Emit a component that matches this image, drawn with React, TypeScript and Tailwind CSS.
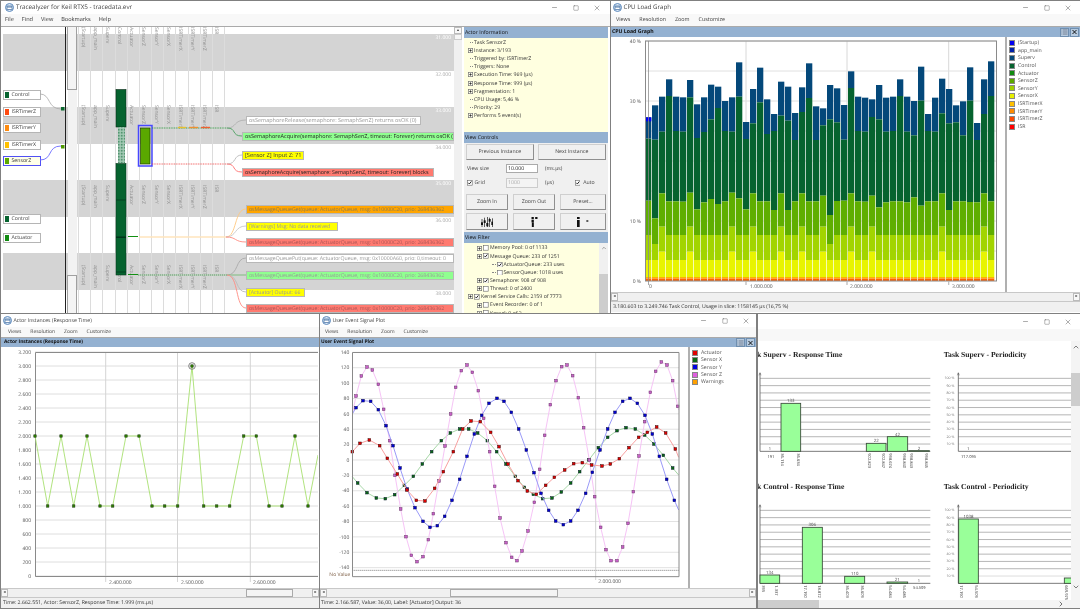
import type { ReactNode } from "react";
import { Minus, Square, X, ChevronUp, ChevronDown, ChevronRight, List } from "lucide-react";

const base = "font-['Open_Sans',sans-serif] text-[5.2px] leading-none text-[#333] [text-rendering:geometricPrecision]";

function AppIcon() {
  return (
    <svg width="9" height="9" viewBox="0 0 18 18" className="shrink-0">
      <circle cx="9" cy="9" r="8" fill="#dbe7f4" stroke="#5f8bbd" strokeWidth="2" />
      <rect x="4" y="6" width="10" height="7" fill="#fff" stroke="#4d77a8" strokeWidth="1.5" />
      <path d="M4 8h10" stroke="#4d77a8" strokeWidth="2" />
    </svg>
  );
}

function WinControls({ className = "" }: { className?: string }) {
  return (
    <div className={"ml-auto flex items-center text-[#444] " + className}>
      <div className="flex w-[21px] justify-center"><Minus size={7} strokeWidth={1.5} /></div>
      <div className="flex w-[21px] justify-center"><Square size={6} strokeWidth={1.5} /></div>
      <div className="flex w-[21px] justify-center"><X size={8} strokeWidth={1.3} /></div>
    </div>
  );
}

function TitleBar({ title, h, right, size = "text-[5.2px]" }: { title?: string; h: string; right?: string; size?: string }) {
  return (
    <div className={"flex shrink-0 items-center gap-[1.5px] bg-white pl-[2px] " + h}>
      {title && <AppIcon />}
      {title && <span className={"text-[#444] " + size}>{title}</span>}
      <WinControls className={right} />
    </div>
  );
}

function MenuBar({ items, h, gap, size = "text-[5px] pl-[5px]" }: { items: string[]; h: string; gap: string; size?: string }) {
  return (
    <div className={"flex shrink-0 items-center bg-[#f8f8f8] text-[#444] " + size + " " + h + " " + gap}>
      {items.map((m) => (
        <span key={m}>{m}</span>
      ))}
    </div>
  );
}

function PanelHead({ title, h = "h-[10px]", buttons, size = "text-[5.2px] pl-[1px]" }: { title: string; h?: string; buttons?: boolean; size?: string }) {
  return (
    <div className={"flex shrink-0 items-center bg-[#94b1d1] font-bold text-[#111] " + size + " " + h}>
      <span>{title}</span>
      {buttons && (
        <div className="ml-auto mr-[1px] flex gap-[1px]">
          <div className="flex size-[9px] items-center justify-center border border-[#6f8fb0] bg-[#b7cbe0]"><List size={8} strokeWidth={1.5} color="#223" /></div>
          <div className="flex size-[9px] items-center justify-center border border-[#6f8fb0] bg-[#b7cbe0]"><X size={8} strokeWidth={3} color="#000" /></div>
        </div>
      )}
    </div>
  );
}

function HScroll({ children }: { children?: ReactNode }) {
  return (
    <div className="flex h-[10px] shrink-0 items-center border-y border-[#c8c8c8] bg-[#f0f0f0] text-[4px] text-[#222]">
      <div className="flex h-[8px] w-[7px] shrink-0 items-center justify-center border border-[#bbb] bg-[#f8f8f8]">◂</div>
      {children}
      <div className="ml-auto flex h-[8px] w-[7px] shrink-0 items-center justify-center border border-[#bbb] bg-[#f8f8f8]">▸</div>
    </div>
  );
}

function Status({ text, pl = "pl-[2px]" }: { text: string; pl?: string }) {
  return <div className={"flex h-[10px] shrink-0 items-center bg-[#f0f0f0] text-[5.2px] text-[#333] " + pl}>{text}</div>;
}

function PlusBox() {
  return (
    <svg width="5" height="5" viewBox="0 0 10 10" className="shrink-0">
      <rect x="0.7" y="0.7" width="8.6" height="8.6" fill="#fffff0" stroke="#777" strokeWidth="1.4" />
      <path d="M2.5 5h5M5 2.5v5" stroke="#222" strokeWidth="1.4" />
    </svg>
  );
}

function Check({ on }: { on?: boolean }) {
  return (
    <svg width="5.5" height="5.5" viewBox="0 0 11 11" className="shrink-0">
      <rect x="0.6" y="0.6" width="9.8" height="9.8" fill="#fff" stroke="#666" strokeWidth="1.2" />
      {on && <path d="M2.5 5.5l2.2 2.4 4-5" fill="none" stroke="#111" strokeWidth="1.8" />}
    </svg>
  );
}

/* ---------- trace view ---------- */

const columns = ["(Startup)", "app_main", "Superv", "Control", "Actuator", "SensorZ", "SensorY", "SensorX", "ISRTimerX", "ISRTimerY", "ISRTimerZ", "ISR"];
// the 37.000 mark sits behind an event label in the picture
const times = ["31.000", "32.000", "33.000", "34.000", "35.000", "36.000", "", "38.000"];

const actors = [
  { name: "Control", pos: "top-[63px]", sw: "bg-[#06632f]" },
  { name: "ISRTimerZ", pos: "top-[80px]", sw: "bg-[#ff4a10]" },
  { name: "ISRTimerY", pos: "top-[96px]", sw: "bg-[#ff8c10]" },
  { name: "ISRTimerX", pos: "top-[113px]", sw: "bg-[#ffc000]" },
  { name: "Control", pos: "top-[187px]", sw: "bg-[#06632f]" },
  { name: "Actuator", pos: "top-[206px]", sw: "bg-[#108a10]" },
];

const events = [
  { t: "osSemaphoreRelease(semaphore: SemaphSenZ) returns osOK (0)", c: "left-[245px] top-[89px] w-[175px] bg-white text-[#999] text-[5.5px]" },
  { t: "osSemaphoreAcquire(semaphore: SemaphSenZ, timeout: Forever) returns osOK (0)", c: "left-[241px] top-[105px] w-[212px] bg-[#90ff90] text-[#222] text-[5.5px]" },
  { t: "[Sensor Z] Input Z: 71", c: "left-[241px] top-[124px] w-[62px] bg-[#ffff00] text-[#333] text-[5.7px]" },
  { t: "osSemaphoreAcquire(semaphore: SemaphSenZ, timeout: Forever) blocks", c: "left-[241px] top-[141px] w-[192px] bg-[#ff7a70] text-[#222] text-[5.4px]" },
  { t: "osMessageQueueGet(queue: ActuatorQueue, msg: 0x10000C20, prio: 268436362", c: "left-[245px] top-[178px] w-[208px] bg-[#ffa500] text-[#8a7a50] text-[5.2px]" },
  { t: "[Warnings] Msg: No data received", c: "left-[245px] top-[195px] w-[92px] bg-[#ffff00] text-[#999] text-[5.2px]" },
  { t: "osMessageQueueGet(queue: ActuatorQueue, msg: 0x10000C20, prio: 268436362", c: "left-[245px] top-[211px] w-[208px] bg-[#ff7a70] text-[#a55] text-[5.2px]" },
  { t: "osMessageQueuePut(queue: ActuatorQueue, msg: 0x10000A60, prio: 0,timeout: 0", c: "left-[245px] top-[227px] w-[208px] bg-white text-[#999] text-[5.2px]" },
  { t: "osMessageQueueGet(queue: ActuatorQueue, msg: 0x10000C20, prio: 268436362", c: "left-[245px] top-[244px] w-[208px] bg-[#90ff90] text-[#999] text-[5.2px]" },
  { t: "[Actuator] Output: 66", c: "left-[245px] top-[261px] w-[59px] bg-[#ffff00] text-[#999] text-[5.2px]" },
  { t: "osMessageQueueGet(queue: ActuatorQueue, msg: 0x10000C20, prio: 268436362", c: "left-[245px] top-[277px] w-[208px] bg-[#ff7a70] text-[#a55] text-[5.2px]" },
];

function TraceView() {
  return (
    <div className="relative h-full flex-1 overflow-hidden bg-white">
      {/* alternating time bands */}
      <div className="flex flex-col pl-[2px] pt-[7px]">
        {times.map((t, i) => (
          <div key={i} className={"h-[36.55px] shrink-0 pr-[3px] pt-[2px] text-right text-[5px] " + (i % 2 === 0 ? "bg-[#d4d4d4] text-white" : "bg-white text-[#aaa]")}>
            {t}
          </div>
        ))}
      </div>

      {/* column rulers */}
      {columns.map((_, i) => (
        <div key={i} className="absolute bottom-0 top-0 w-px bg-[#dcdcdc]" style={{ left: 77 + 12.17 * i }} />
      ))}
      <div className="absolute bottom-0 top-0 w-px bg-[#dcdcdc]" style={{ left: 223 }} />
      {[0, 78, 158, 238].map((top) =>
        columns.map((c, i) => (
          <span key={c + top} className="absolute text-[5px] text-[#8f8f8f] [writing-mode:vertical-rl]" style={{ left: 78.5 + 12.17 * i, top }}>
            {c}
          </span>
        )),
      )}

      {/* timeline scrubber */}
      <div className="absolute bottom-0 left-[64px] top-0 w-[1px] bg-[#222]" />
      <div className="absolute left-[67px] top-[63px] h-[185px] w-[9px] bg-[#f2f2f2]" />
      <div className="absolute left-[66px] top-0 h-[63px] w-[10px] border border-t-0 border-[#a0a0a0] bg-[#f4f4f4]" />
      <div className="absolute bottom-0 left-[66px] top-[248px] w-[10px] border border-b-0 border-[#a0a0a0] bg-[#f4f4f4]" />

      {/* actors on the left */}
      {actors.map((a) => (
        <div key={a.name + a.pos} className={"absolute left-[2px] flex h-[9.5px] w-[38px] items-center gap-[3px] border border-b-[1.5px] border-r-[1.5px] border-[#b5b5b5] bg-white pl-[1px] text-[5.2px] text-[#444] " + a.pos}>
          <span className={"h-[6px] w-[3.5px] shrink-0 " + a.sw} />
          {a.name}
        </div>
      ))}
      <div className="absolute left-[2px] top-[129px] flex h-[10px] w-[38px] items-center gap-[3px] border-[1.5px] border-[#5050f4] bg-[#ffffe8] pl-[1px] text-[5.2px] text-[#333]">
        <span className="h-[6px] w-[3.5px] shrink-0 bg-[#5aa800]" />
        SensorZ
      </div>

      {/* fragments and connectors */}
      <svg className="absolute left-0 top-0" width="453" height="286" viewBox="0 27 453 286">
        <defs>
          <pattern id="hatch" width="1.5" height="1.5" patternUnits="userSpaceOnUse">
            <rect width="1.5" height="1.5" fill="#a8cdb8" />
            <rect width="0.75" height="0.75" fill="#2f7c52" />
          </pattern>
        </defs>
        <path d="M39 94C50 94 46 109 60 109" fill="none" stroke="#aaa" strokeWidth="0.8" />
        <path d="M39 160C52 160 46 146 60 146" fill="none" stroke="#6a6aff" strokeWidth="0.9" />
        <rect x="60" y="107" width="3.5" height="3.5" fill="#0b6b2f" />
        <rect x="60" y="145" width="3.5" height="3.5" fill="#4f9a00" />

        <rect x="115" y="89.5" width="10" height="37.5" fill="#06632f" stroke="#0a2c18" strokeWidth="0.6" />
        <rect x="117" y="127" width="7" height="36" fill="url(#hatch)" />
        <rect x="115" y="163.5" width="10" height="111.5" fill="#06632f" stroke="#0a3a1e" strokeWidth="0.6" />
        <rect x="115" y="199.5" width="10" height="1" fill="#034020" />
        <rect x="115" y="236.5" width="10" height="1.4" fill="#02301a" />
        <rect x="115" y="271.5" width="10" height="1" fill="#034020" />

        <rect x="137.5" y="125.5" width="13.5" height="40.5" fill="none" stroke="#4848ff" strokeWidth="1.5" />
        <rect x="139.5" y="128" width="9.5" height="36" fill="#5aa800" stroke="#203f00" strokeWidth="0.7" />

        <path d="M151 128H226" stroke="#2e9a3e" strokeWidth="0.9" strokeDasharray="1 0.7" />
        <path d="M177 127.5h8" stroke="#e8c030" strokeWidth="1.4" />
        <path d="M188 127.5h9" stroke="#f09030" strokeWidth="1.4" />
        <path d="M200 127.5h9" stroke="#f06030" strokeWidth="1.4" />
        <path d="M226 128C236 128 232 120 245 120" fill="none" stroke="#b0b0b0" strokeWidth="0.9" />
        <path d="M226 128C236 128 230 136 241 136" fill="none" stroke="#4ca060" strokeWidth="0.9" />

        <path d="M151 164H226" stroke="#f05050" strokeWidth="0.9" strokeDasharray="1 0.7" />
        <path d="M226 164C236 164 232 155 241 155" fill="none" stroke="#bbb" strokeWidth="0.9" />
        <path d="M226 164C236 164 230 172 241 172" fill="none" stroke="#ff7070" strokeWidth="0.9" />

        <path d="M127 236.5h10" stroke="#129012" strokeWidth="1" />
        <path d="M138 237H225" stroke="#ffe4bd" strokeWidth="1.6" />
        <path d="M225 237C236 237 233 209 245 209" fill="none" stroke="#ffc880" strokeWidth="0.9" />
        <path d="M225 237C236 237 233 226 245 226" fill="none" stroke="#c8c8c8" strokeWidth="0.9" />
        <path d="M225 237C236 237 233 242 245 242" fill="none" stroke="#ff8a80" strokeWidth="0.9" />

        <path d="M127 274.5h10" stroke="#129012" strokeWidth="1" />
        <path d="M137 275H226" stroke="#b5d0b5" strokeWidth="1.4" />
        <path d="M137 275H226" stroke="#3a7a4a" strokeWidth="0.6" strokeDasharray="1 1" />
        <path d="M226 275C238 275 234 258 245 258" fill="none" stroke="#aaa" strokeWidth="0.9" />
        <path d="M226 275H245" stroke="#8cc08c" strokeWidth="1.2" />
        <path d="M226 275C238 275 234 292 245 292" fill="none" stroke="#bbb" strokeWidth="0.9" />
        <path d="M226 275C238 275 234 308 245 308" fill="none" stroke="#ff8a80" strokeWidth="0.9" />
      </svg>

      {events.map((e, i) => (
        <div key={i} className={"absolute flex h-[9px] items-center overflow-hidden whitespace-nowrap border border-b-[1.5px] border-[#b8b8b8] pl-[2px] " + e.c}>
          {e.t}
        </div>
      ))}
    </div>
  );
}

/* ---------- side panel ---------- */

function InfoRow({ text, plus }: { text: string; plus?: boolean }) {
  return (
    <div className="flex h-[8.12px] items-center pl-[4px] text-[5.2px] text-[#333]">
      {plus ? <PlusBox /> : <span className="ml-[2px] w-[3px] border-t border-dotted border-[#888]" />}
      <span className="ml-[1px]">{text}</span>
    </div>
  );
}

function FilterRow({ text, indent, on, box = true, nested }: { text: string; indent: string; on?: boolean; box?: boolean; nested?: boolean }) {
  return (
    <div className={"flex h-[8.15px] items-center gap-[1px] whitespace-nowrap text-[5.2px] text-[#333] " + indent}>
      {box ? <PlusBox /> : <span className="w-[4px] border-t border-dotted border-[#888]" />}
      <Check on={on} />
      <span className={nested ? "" : "ml-[0.5px]"}>{text}</span>
    </div>
  );
}

const btn = "flex items-center justify-center border border-[#cfcfcf] border-b-[#8f8f8f] border-r-[#8f8f8f] bg-[#f0f0f0] text-[5.2px] text-[#444]";

function SidePanel() {
  return (
    <div className="ml-[2px] flex h-full w-[144px] shrink-0 flex-col bg-[#f0f0f0]">
      <PanelHead title="Actor Information" h="h-[11px] font-normal" />
      <div className="h-[94px] shrink-0 bg-[#ffffe0] pt-[0.5px]">
        <InfoRow text="Task SensorZ" />
        <InfoRow text="Instance: 3/193" plus />
        <InfoRow text="Triggered by: ISRTimerZ" />
        <InfoRow text="Triggers: None" />
        <InfoRow text="Execution Time: 969 (µs)" plus />
        <InfoRow text="Response Time: 999 (µs)" plus />
        <InfoRow text="Fragmentation: 1" plus />
        <InfoRow text="CPU Usage: 5,46 %" />
        <InfoRow text="Priority: 29" />
        <InfoRow text="Performs 5 event(s)" plus />
      </div>
      <PanelHead title="View Controls" h="h-[11px] font-normal" />
      <div className="flex h-[89px] shrink-0 flex-col px-[2px] pt-[1px]">
        <div className="flex h-[16px] gap-[4px]">
          <div className={btn + " w-[68px]"}>Previous Instance</div>
          <div className={btn + " w-[69px]"}>Next Instance</div>
        </div>
        <div className="mt-[4px] flex h-[9px] items-center text-[5.2px] text-[#444]">
          <span className="w-[40px] pl-[1px]">View size</span>
          <div className="flex h-[9px] w-[32px] items-center border border-[#aaa] bg-white pl-[1px] text-[#222]">10.000</div>
          <span className="ml-[7px]">(ms.µs)</span>
        </div>
        <div className="mt-[5px] flex h-[10px] items-center text-[5.2px] text-[#444]">
          <span className="flex w-[40px] items-center gap-[2px] pl-[1px]"><Check on />Grid</span>
          <div className="flex h-[10px] w-[32px] items-center border border-[#ccc] bg-[#f4f4f4] pl-[1px] text-[#aaa]">1000</div>
          <span className="ml-[7px]">(µs)</span>
          <span className="ml-[21px] flex items-center gap-[3px]"><Check on />Auto</span>
        </div>
        <div className="mt-[6px] flex h-[16px] gap-[5px]">
          <div className={btn + " w-[42px]"}>Zoom In</div>
          <div className={btn + " w-[42px]"}>Zoom Out</div>
          <div className={btn + " w-[46px]"}>Preset...</div>
        </div>
        <div className="mt-[3px] flex h-[17px] gap-[5px]">
          <div className={btn + " w-[42px]"}>
            <svg width="12" height="10" viewBox="0 0 36 30" fill="#111">
              <rect x="2" y="6" width="2" height="24" /><rect x="0" y="16" width="6" height="8" />
              <rect x="10" y="2" width="2" height="28" /><rect x="8" y="10" width="6" height="8" />
              <rect x="18" y="0" width="2" height="30" /><rect x="16" y="18" width="6" height="10" />
              <rect x="25" y="2" width="2" height="28" /><rect x="23" y="6" width="6" height="8" />
              <rect x="33" y="4" width="2" height="26" /><rect x="31" y="14" width="5" height="10" />
            </svg>
          </div>
          <div className={btn + " w-[42px]"}>
            <svg width="7" height="10" viewBox="0 0 18 30" fill="#111">
              <rect x="0" y="0" width="7" height="6" /><rect x="11" y="0" width="7" height="6" /><rect x="0" y="8" width="7" height="8" /><rect x="1" y="16" width="6" height="14" />
            </svg>
          </div>
          <div className={btn + " w-[46px]"}>
            <svg width="12" height="10" viewBox="0 0 36 30" fill="#111">
              <rect x="0" y="0" width="8" height="6" /><rect x="0" y="9" width="8" height="21" /><rect x="28" y="10" width="6" height="4" />
            </svg>
          </div>
        </div>
      </div>
      <PanelHead title="View Filter" h="h-[11px] font-normal" />
      <div className="relative flex-1 overflow-hidden bg-[#ffffe0] pt-[1px]">
        <FilterRow text="Memory Pool: 0 of 1133" indent="pl-[13px]" />
        <FilterRow text="Message Queue: 233 of 1251" indent="pl-[13px]" on />
        <FilterRow text="ActuatorQueue: 233 uses" indent="pl-[28px]" on box={false} nested />
        <FilterRow text="SensorQueue: 1018 uses" indent="pl-[28px]" box={false} nested />
        <FilterRow text="Semaphore: 908 of 908" indent="pl-[13px]" on />
        <FilterRow text="Thread: 0 of 2400" indent="pl-[13px]" />
        <FilterRow text="Kernel Service Calls: 2159 of 7773" indent="pl-[4px]" on />
        <FilterRow text="Event Recorder: 0 of 1" indent="pl-[13px]" />
        <FilterRow text="Kernel: 0 of 2" indent="pl-[13px]" />
        {/* overlay scrollbar at the panel's edge */}
        <div className="absolute bottom-0 right-0 top-0 flex w-[9px] flex-col items-center bg-[#f0f0f0] pt-[2px]">
          <ChevronUp size={6} strokeWidth={2} color="#555" />
          <div className="mt-[23px] w-full flex-1 bg-[#cdcdcd]" />
        </div>
      </div>
    </div>
  );
}

/* ---------- cpu load ---------- */

const tops = [352, 316, 290, 238, 290, 292, 240, 313, 292, 254, 260, 303, 292, 187, 366, 267, 203, 298, 342, 245, 260, 339, 262, 190, 319, 325, 255, 265, 315, 214, 290, 293, 298, 255, 293, 290, 238, 290, 303, 200, 342, 293, 236, 267, 316, 304, 202, 369, 238, 184];
const greens = [416, 419, 395, 288, 393, 395, 292, 414, 396, 358, 324, 393, 395, 290, 417, 370, 307, 402, 393, 347, 362, 420, 336, 294, 420, 376, 358, 367, 419, 264, 393, 395, 351, 358, 395, 393, 288, 395, 406, 302, 393, 395, 340, 370, 367, 406, 302, 420, 342, 288];
const controlEnds = [62, 115, 40, 64, 64, 65, 38, 88, 67, 57, 72, 64, 38, 55, 88, 40, 64, 64, 90, 40, 90, 64, 40, 64, 64, 47, 105, 63, 62, 40, 64, 65, 47, 82, 67, 64, 64, 67, 52, 77, 64, 64, 40, 90, 64, 64, 66, 67, 40, 64];

const cpuLegend = [
  ["(Startup)", "bg-[#0000f0]"],
  ["app_main", "bg-[#0020a8]"],
  ["Superv", "bg-[#04487a]"],
  ["Control", "bg-[#06632f]"],
  ["Actuator", "bg-[#108a10]"],
  ["SensorZ", "bg-[#5aa800]"],
  ["SensorY", "bg-[#a0d000]"],
  ["SensorX", "bg-[#e8f000]"],
  ["ISRTimerX", "bg-[#ffc000]"],
  ["ISRTimerY", "bg-[#ff8c00]"],
  ["ISRTimerZ", "bg-[#ff4a00]"],
  ["ISR", "bg-[#ff0000]"],
];

function CpuChart() {
  const ty = (z: number) => z / 3; // top crop rows map straight to page y
  const by = (z: number) => 180 + z / 3;
  return (
    <svg width="394" height="255" viewBox="611 37 394 255" className="shrink-0">
      {[136, 237, 338.7].map((x) => (
        <path key={x} d={`M${610 + x} 41V285`} stroke="#d8d8d8" strokeWidth="1" />
      ))}
      {[41, 71, 101, 131, 161, 191, 221, 251].map((y) => (
        <path key={y} d={`M645 ${y}H996`} stroke="#e0e0e0" strokeWidth="1" />
      ))}
      {tops.map((t, i) => {
        const x = 645 + i * 7;
        const ce = controlEnds[i];
        const sz = ce <= 47 ? 140 : ce >= 100 ? 192 : 165;
        const sy = ce <= 47 ? 215 : 240;
        return (
          <g key={i}>
            <rect x={x} y={ty(t)} width="6.3" height={ty(greens[i]) - ty(t)} fill="#04487a" />
            <rect x={x} y={ty(greens[i])} width="6.3" height={by(ce) - ty(greens[i])} fill="#06632f" />
            <rect x={x} y={by(ce)} width="6.3" height={by(sz) - by(ce)} fill="#5fae00" />
            <rect x={x} y={by(sz)} width="6.3" height={by(sy) - by(sz)} fill="#a2d400" />
            <rect x={x} y={by(sy)} width="6.3" height={277 - by(sy)} fill="#e8f400" />
            <rect x={x} y="277" width="6.3" height="1.6" fill="#ffb000" />
            <rect x={x} y="278.6" width="6.3" height="2.4" fill="#ff6000" />
          </g>
        );
      })}
      <rect x="645" y="117.3" width="6.3" height="4" fill="#0000f0" />
      <rect x="645.5" y="41" width="351" height="240" fill="none" stroke="#8a8a8a" strokeWidth="1" />
      <path d="M648.5 41V285" stroke="#8a8a8a" strokeWidth="1" opacity="0.75" />
      {[136, 237, 338.7].map((x) => (
        <path key={x} d={`M${610 + x} 281V285`} stroke="#bbb" strokeWidth="1" />
      ))}
      {[["40 %", 41], ["30 %", 101], ["10 %", 221], ["0 %", 281]].map(([t, y]) => (
        <text key={t} x="641" y={Number(y) + 2} textAnchor="end" fontSize="5" fill="#555">{t}</text>
      ))}
      {[["0", 649], ["1.000.000", 750], ["2.000.000", 850], ["3.000.000", 952]].map(([t, x]) => (
        <text key={t} x={x} y="288" fontSize="5" fill="#555">{t}</text>
      ))}
    </svg>
  );
}

function CpuWindow() {
  return (
    <div className="absolute left-[610px] top-0 flex h-[314px] w-[470px] flex-col border-y border-l border-[#808080] bg-white">
      <TitleBar title="CPU Load Graph" h="h-[13px]" right="pr-[2px]" size="text-[6.2px]" />
      <MenuBar items={["Views", "Resolution", "Zoom", "Customize"]} h="h-[12px]" gap="gap-[9px]" size="text-[5.4px] pl-[5px]" />
      <div className="h-px shrink-0 bg-[#aaa]" />
      <PanelHead title="CPU Load Graph" buttons />
      <div className="flex h-[255px] shrink-0">
        <CpuChart />
        <div className="flex h-full flex-1 flex-col gap-0 border-l-2 border-[#b0b0b0] pl-[2px] pt-[2px]">
          {cpuLegend.map(([t, c]) => (
            <div key={t} className="flex h-[7.62px] items-center gap-[3px] text-[5.2px] text-[#555]">
              <span className={"size-[6px] border border-[#888] " + c} />
              {t}
            </div>
          ))}
        </div>
      </div>
      <HScroll />
      <Status text="3.180.603 to 3.249.746 Task Control, Usage in slice: 1158145 µs (16,75 %)" />
    </div>
  );
}

/* ---------- actor instances ---------- */

const inst: [number, number][] = [[35, 2], [47.7, 1], [61, 2], [73.7, 1], [87, 2], [100, 1], [112.7, 1], [126, 2], [139, 2], [152, 1], [164.7, 1], [177.7, 1], [192, 3], [203.7, 1], [216.7, 1], [229.7, 1], [243.7, 2], [256.3, 2], [269, 1], [282, 1], [295, 2], [308, 1]];
const instY = (v: number) => 576 - v * 70;

function InstanceChart() {
  const labels = ["3.200", "3.000", "2.800", "2.600", "2.400", "2.200", "2.000", "1.800", "1.600", "1.400", "1.200", "1.000", "800", "600", "400", "200", "0"];
  const line = inst.map(([x, v]) => `${x},${instY(v)}`).join(" ") + " 318,455";
  return (
    <svg width="317" height="241" viewBox="1 347 317 241">
      {labels.map((l, i) => (
        <g key={l}>
          <path d={`M35 ${352 + i * 14}H318`} stroke="#dedede" strokeWidth="1" />
          <text x="31" y={354 + i * 14} textAnchor="end" fontSize="5" fill="#555">{l}</text>
        </g>
      ))}
      {[105.7, 177.5, 250.3].map((x) => (
        <path key={x} d={`M${x} 352V582`} stroke="#d4d4d4" strokeWidth="1" />
      ))}
      <path d="M35.5 576.5V352.5H318M35.5 576.5H318" fill="none" stroke="#8a8a8a" strokeWidth="1" />
      <polyline points={line} fill="none" stroke="#a8e070" strokeWidth="0.9" />
      {inst.map(([x, v]) => (
        <rect key={x} x={x - 1.2} y={instY(v) - 1.2} width="2.4" height="2.4" fill="#2f7f00" stroke="#12300a" strokeWidth="0.5" />
      ))}
      <circle cx="192" cy="366" r="3.3" fill="none" stroke="#777" strokeWidth="0.9" />
      {[["2.400.000", 109], ["2.500.000", 181], ["2.600.000", 253]].map(([t, x]) => (
        <text key={t} x={x} y="583.5" fontSize="5" fill="#555">{t}</text>
      ))}
    </svg>
  );
}

/* ---------- signal plot, numbers read in 3x crop coordinates ---------- */

const sensorZ = [108, 258, 124, 198, 141, 171, 157, 180, 175, 223, 191, 298, 209, 392, 225, 496, 242, 597, 258, 680, 274, 736, 291, 755, 309, 740, 325, 689, 340, 611, 357, 513, 375, 408, 392, 312, 407, 232, 424, 182, 441, 165, 457, 187, 475, 242, 491, 325, 509, 425, 524, 529, 540, 624, 558, 698, 575, 742, 591, 752, 606, 723, 624, 663, 643, 577, 659, 478, 674, 376, 691, 284, 708, 212, 725, 170, 741, 165, 758, 197, 775, 263, 791, 353, 808, 450, 824, 560, 842, 652, 858, 719, 873, 752, 891, 752, 908, 711, 924, 640, 940, 545, 957, 438, 974, 335, 991, 247, 1007, 184, 1024, 156, 1041, 165, 1058, 212, 1073, 289];
const sensorY = [108, 293, 129, 272, 152, 274, 175, 299, 198, 347, 219, 407, 240, 474, 261, 537, 285, 593, 309, 634, 330, 652, 352, 647, 374, 619, 396, 571, 419, 508, 441, 439, 463, 372, 485, 316, 507, 280, 531, 265, 552, 274, 574, 307, 596, 357, 619, 420, 642, 488, 663, 550, 686, 601, 707, 633, 730, 644, 752, 633, 774, 601, 797, 550, 817, 487, 840, 420, 863, 357, 885, 307, 908, 274, 930, 265, 952, 280, 975, 316, 997, 372, 1018, 439, 1040, 508, 1063, 571];
const sensorX = [113, 519, 141, 548, 169, 564, 196, 566, 224, 554, 253, 526, 280, 499, 307, 462, 335, 425, 364, 392, 391, 369, 419, 357, 446, 357, 473, 369, 502, 392, 530, 425, 558, 462, 586, 499, 613, 532, 640, 553, 668, 566, 696, 564, 724, 546, 752, 519, 779, 485, 807, 449, 835, 413, 863, 382, 891, 362, 918, 353, 946, 357, 974, 375, 1002, 402, 1030, 436, 1058, 474];
const actuator = [97, 425, 120, 400, 148, 390, 179, 407, 202, 445, 232, 492, 261, 540, 289, 571, 315, 573, 344, 535, 370, 485, 400, 425, 428, 357, 453, 333, 481, 335, 512, 367, 537, 410, 564, 462, 594, 512, 622, 543, 649, 553, 677, 526, 703, 502, 734, 480, 761, 461, 787, 458, 815, 465, 846, 468, 871, 462, 898, 446, 927, 413, 956, 382, 982, 367, 1010, 351, 1037, 369, 1066, 417];

function pairs(a: number[]) {
  const out: [number, number][] = [];
  for (let i = 0; i < a.length; i += 2) out.push([a[i], a[i + 1]]);
  return out;
}

function Series({ data, start, end, line, fill, edge }: { data: number[]; start?: string; end: string; line: string; fill: string; edge: string }) {
  const pts = pairs(data);
  return (
    <g>
      <polyline points={(start ? start + " " : "") + pts.map((p) => p.join(",")).join(" ") + " " + end} fill="none" stroke={line} strokeWidth="3" />
      {pts.map(([x, y]) => (
        <rect key={x} x={x - 4} y={y - 4} width="8" height="8" fill={fill} stroke={edge} strokeWidth="1.6" />
      ))}
    </g>
  );
}

function SignalChart() {
  const vals = [140, 120, 100, 80, 60, 40, 20, 0, -20, -40, -60, -80, -100, -120, -140];
  return (
    <svg width="368" height="241" viewBox="0 111 1104 723" className="shrink-0">
      {vals.map((v, i) => (
        <g key={v}>
          <path d={`M97 ${127 + i * 46.14}H1077`} stroke="#e2e2e2" strokeWidth="3" />
          <text x="88" y={132 + i * 46.14} textAnchor="end" fontSize="15" fill="#555">{v}</text>
        </g>
      ))}
      <text x="91" y="797" textAnchor="end" fontSize="15" fill="#7a5a40">No Value</text>
      <path d="M97 781H1077" stroke="#555" strokeWidth="2.4" strokeDasharray="3 3" />
      <path d="M827 127V810" stroke="#c8c8c8" strokeWidth="2.4" />
      <text x="835" y="820" fontSize="15" fill="#555">2.000.000</text>
      <Series data={sensorX} start="97,500" end="1076,495" line="#a8d8a8" fill="#0a6a14" edge="#123" />
      <Series data={sensorZ} start="97,312" end="1076,300" line="#f6c4f6" fill="#c860c8" edge="#704070" />
      <Series data={sensorY} start="97,312" end="1076,600" line="#9a9af8" fill="#0000d8" edge="#101050" />
      <Series data={actuator} end="1076,442" line="#f8a0a0" fill="#e00000" edge="#401010" />
      <path d="M97.5 127.5H1077V800H97.5Z" fill="none" stroke="#8a8a8a" strokeWidth="3" />
    </svg>
  );
}

const signalLegend = [
  ["Actuator", "bg-[#e00000]"],
  ["Sensor X", "bg-[#0a6a14]"],
  ["Sensor Y", "bg-[#0000e0]"],
  ["Sensor Z", "bg-[#e060e0]"],
  ["Warnings", "bg-[#ffa000]"],
];

/* ---------- histograms, drawn in 3x crop coordinates ---------- */

type Bar = [number, number, number, string];
type Tag = [string, number, number?];

function Histogram({ ox, oy, w, bars, rot, ones, pct, title, tx }: { ox: number; oy: number; w: number; bars: Bar[]; rot: Tag[]; ones?: Tag[]; pct?: boolean; title: string; tx: number }) {
  const axis = oy + 219;
  return (
    <g>
      <text x={tx} y={oy - 64} fontSize="23" fontWeight="700" fontFamily="Liberation Serif, serif" fill="#222">{title}</text>
      {Array.from({ length: 10 }, (_, i) => (
        <g key={i}>
          <path d={`M${ox} ${oy + i * 21.9}H${ox + w}`} stroke={i === 9 && pct ? "#d8d8d8" : "#aaa"} strokeWidth="2.6" />
          {pct && <text x={ox - 12} y={oy + i * 21.9 + 3} textAnchor="end" fontSize="10.5" fill="#777">{100 - i * 10} %</text>}
        </g>
      ))}
      <path d={`M${ox} ${oy - 16}V${axis}M${ox} ${axis}H${ox + w}`} stroke="#666" strokeWidth="2.6" fill="none" />
      <path d={`M${ox - 3} ${oy - 9}L${ox} ${oy - 17}L${ox + 3} ${oy - 9}`} fill="none" stroke="#555" strokeWidth="1.5" />
      {bars.map(([x0, x1, top, label]) => (
        <g key={x0}>
          <rect x={x0} y={top} width={x1 - x0} height={axis - top} fill="#99ff99" stroke="#3a4a3a" strokeWidth="2.6" />
          <text x={(x0 + x1) / 2} y={top - 3} textAnchor="middle" fontSize="13" fill="#444">{label}</text>
        </g>
      ))}
      {(ones ?? []).map(([t, x, y]) => (
        <text key={t + x} x={x} y={y} textAnchor="middle" fontSize="12" fill="#333">{t}</text>
      ))}
      {rot.map(([t, x]) => (
        <text key={t + x} transform={`translate(${x} ${axis + 6}) rotate(90)`} fontSize="12" fill="#333">{t}</text>
      ))}
    </g>
  );
}

function HistogramWindow() {
  return (
    <div className="absolute left-[757px] top-[313px] flex h-[296px] w-[323px] flex-col border-y border-l border-[#808080] bg-white">
      <TitleBar h="h-[15px]" right="pr-[2px]" />
      <MenuBar items={[]} h="h-[12px]" gap="gap-0" />
      <div className="flex min-h-0 flex-1">
        <svg width="313" height="259" viewBox="6 93 939 777" className="shrink-0">
          <Histogram
            ox={12} oy={205} w={511} title="k Superv - Response Time" tx={3}
            bars={[[75, 134, 280, "133"], [331, 390, 400, "22"], [394, 455, 380, "42"], [458, 520, 422, "2"]]}
            ones={[["1", 42, 421], ["191", 45, 443]]}
            rot={[["36.114", 76], ["36.634", 123], ["902.823", 335], ["902.847", 378], ["998.674", 398], ["998.840", 441], ["998.843", 462], ["998.845", 507]]}
          />
          <Histogram
            ox={607} oy={205} w={338} pct title="Task Superv - Periodicity" tx={563}
            bars={[]}
            ones={[["1", 637, 421], ["717.095", 638, 443]]}
            rot={[]}
          />
          <Histogram
            ox={12} oy={601} w={511} title="k Control - Response Time" tx={3}
            bars={[[12, 71, 795, "134"], [139, 199, 652, "306"], [266, 326, 799, "110"], [393, 455, 816, "21"]]}
            ones={[["1", 489, 816], ["54.509", 490, 838]]}
            rot={[["395", 17], ["1.337", 58], ["17.190", 143], ["18.872", 186], ["36.403", 271], ["36.609", 314], ["54.484", 398], ["54.486", 441]]}
          />
          <Histogram
            ox={607} oy={601} w={338} pct title="Task Control - Periodicity" tx={563}
            bars={[[608, 667, 627, "1038"], [925, 950, 804, ""]]}
            rot={[["17.190", 613], ["54.509", 656], ["669.975", 928]]}
          />
        </svg>
        <div className="flex flex-1 flex-col items-center bg-[#f4f4f4] pt-[2px]">
          <ChevronUp size={8} strokeWidth={2} color="#444" />
          <div className="mt-[22px] h-[33px] w-full bg-[#cdcdcd]" />
          <ChevronDown size={8} strokeWidth={2} color="#444" className="mt-auto mb-[9px]" />
        </div>
      </div>
      <div className="flex h-[8px] shrink-0 items-center bg-[#f4f4f4]">
        <div className="h-full w-[61px] bg-[#cdcdcd]" />
        <ChevronRight size={8} strokeWidth={2} color="#333" className="ml-auto mr-[15px]" />
      </div>
    </div>
  );
}

export default function App() {
  return (
    <div className={"relative h-[609px] w-[1080px] overflow-hidden bg-white blur-[0.3px] " + base}>
      {/* main trace window */}
      <div className="absolute left-0 top-0 flex h-[314px] w-[610px] flex-col border-y border-l border-[#808080] bg-white">
        <div className="flex h-[13px] shrink-0 items-center gap-[2px] pl-[4px]">
          <AppIcon />
          <span className="text-[6.3px] text-[#444]">Tracealyzer for Keil RTX5 - tracedata.evr</span>
          <WinControls className="pr-[3px]" />
        </div>
        <div className="flex h-[12px] shrink-0 items-center gap-[8px] bg-[#f8f8f8] pl-[4px] text-[5.6px] text-[#333]">
          <span>File</span>
          <span>Find</span>
          <span>View</span>
          <span>Bookmarks</span>
          <span>Help</span>
        </div>
        <div className="h-[1px] shrink-0 bg-[#aaa]" />
        <div className="flex min-h-0 flex-1 pr-[2px]">
          <TraceView />
          <div className="flex h-full w-[8px] shrink-0 flex-col bg-[#f0f0f0]">
            <div className="flex h-[7px] items-center justify-center border border-[#bbb] bg-[#f8f8f8] text-[4px]">▴</div>
            <div className="h-[6px] border border-[#ccc] bg-[#f6f6f6]" />
          </div>
          <SidePanel />
        </div>
      </div>

      <CpuWindow />

      {/* actor instances */}
      <div className="absolute left-0 top-[313px] flex h-[296px] w-[320px] flex-col border-y border-x border-[#808080] bg-white">
        <TitleBar title="Actor Instances (Response Time)" h="h-[13px]" right="hidden" />
        <MenuBar items={["Views", "Resolution", "Zoom", "Customize"]} h="h-[10px]" gap="gap-[9px]" size="text-[5px] pl-[7px]" />
        <div className="h-px shrink-0 bg-[#aaa]" />
        <PanelHead title="Actor Instances (Response Time)" h="h-[9px]" size="text-[4.9px] pl-[3px]" />
        <div className="h-[241px] shrink-0"><InstanceChart /></div>
        <HScroll>
          <div className="ml-[238px] h-[8px] w-[47px] border border-[#aaa] bg-[#f4f4f4]" />
        </HScroll>
        <Status text="Time: 2.662.551, Actor: SensorZ, Response Time: 1.999 (ms.µs)" />
      </div>

      {/* user event signal plot */}
      <div className="absolute left-[319px] top-[313px] flex h-[296px] w-[438px] flex-col border-y border-x border-[#808080] bg-white">
        <TitleBar title="User Event Signal Plot" h="h-[13px]" right="pr-0" />
        <MenuBar items={["Views", "Resolution", "Zoom", "Customize"]} h="h-[10px]" gap="gap-[9px]" />
        <div className="h-px shrink-0 bg-[#aaa]" />
        <PanelHead title="User Event Signal Plot" h="h-[9px]" buttons size="text-[4.9px] pl-[1px]" />
        <div className="flex h-[241px] shrink-0">
          <SignalChart />
          <div className="flex flex-1 flex-col border-l-2 border-[#b0b0b0] pl-[2px] pt-[2px]">
            {signalLegend.map(([t, c]) => (
              <div key={t} className="flex h-[7.3px] items-center gap-[3px] text-[5.2px] text-[#555]">
                <span className={"size-[6px] border border-[#888] " + c} />
                {t}
              </div>
            ))}
          </div>
        </div>
        <HScroll>
          <div className="ml-[123px] h-[8px] w-[108px] border border-[#aaa] bg-[#f4f4f4]" />
        </HScroll>
        <Status text="Time: 2.166.587, Value: 36,00, Label: [Actuator] Output: 36" pl="pl-[1px]" />
      </div>

      <HistogramWindow />
    </div>
  );
}
